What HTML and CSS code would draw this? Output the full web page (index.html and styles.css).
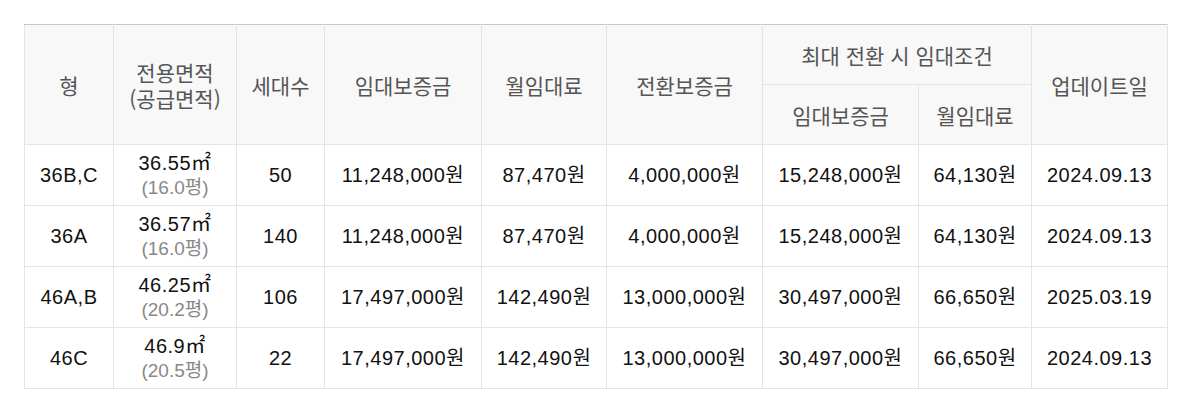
FILE: index.html
```html
<!DOCTYPE html>
<html lang="ko">
<head>
<meta charset="utf-8">
<link rel="stylesheet" href="styles.css">
</head>
<body>
<table class="rent">
  <colgroup>
    <col class="c1"><col class="c2"><col class="c3"><col class="c4"><col class="c5">
    <col class="c6"><col class="c7"><col class="c8"><col class="c9">
  </colgroup>
  <thead>
    <tr>
      <th rowspan="2">형</th>
      <th rowspan="2">전용면적<br>(공급면적)</th>
      <th rowspan="2">세대수</th>
      <th rowspan="2">임대보증금</th>
      <th rowspan="2">월임대료</th>
      <th rowspan="2">전환보증금</th>
      <th colspan="2">최대 전환 시 임대조건</th>
      <th rowspan="2">업데이트일</th>
    </tr>
    <tr>
      <th>임대보증금</th>
      <th>월임대료</th>
    </tr>
  </thead>
  <tbody>
    <tr>
      <td>36B,C</td>
      <td><span class="area">36.55㎡</span><span class="py">(16.0평)</span></td>
      <td>50</td>
      <td>11,248,000원</td>
      <td>87,470원</td>
      <td>4,000,000원</td>
      <td>15,248,000원</td>
      <td>64,130원</td>
      <td>2024.09.13</td>
    </tr>
    <tr>
      <td>36A</td>
      <td><span class="area">36.57㎡</span><span class="py">(16.0평)</span></td>
      <td>140</td>
      <td>11,248,000원</td>
      <td>87,470원</td>
      <td>4,000,000원</td>
      <td>15,248,000원</td>
      <td>64,130원</td>
      <td>2024.09.13</td>
    </tr>
    <tr>
      <td>46A,B</td>
      <td><span class="area">46.25㎡</span><span class="py">(20.2평)</span></td>
      <td>106</td>
      <td>17,497,000원</td>
      <td>142,490원</td>
      <td>13,000,000원</td>
      <td>30,497,000원</td>
      <td>66,650원</td>
      <td>2025.03.19</td>
    </tr>
    <tr>
      <td>46C</td>
      <td><span class="area">46.9㎡</span><span class="py">(20.5평)</span></td>
      <td>22</td>
      <td>17,497,000원</td>
      <td>142,490원</td>
      <td>13,000,000원</td>
      <td>30,497,000원</td>
      <td>66,650원</td>
      <td>2024.09.13</td>
    </tr>
  </tbody>
</table>
</body>
</html>
```

FILE: styles.css
```css
html, body {
  margin: 0;
  background: #fff;
}
body {
  padding: 24px;
  font-family: "Liberation Sans", "Noto Sans CJK KR", sans-serif;
}
.rent {
  border-collapse: collapse;
  table-layout: fixed;
  width: 1144px;
  border-top: 1px solid #c8c8c8;
}
.c1 { width: 89px; }
.c2 { width: 123px; }
.c3 { width: 88px; }
.c4 { width: 157px; }
.c5 { width: 125px; }
.c6 { width: 156px; }
.c7 { width: 156px; }
.c8 { width: 113px; }
.c9 { width: 136px; }
.rent th, .rent td {
  border: 1px solid #e4e4e4;
  text-align: center;
  padding: 0;
}
.rent th {
  background: #f8f8f8;
  color: #555;
  font-family: "Noto Sans CJK KR", sans-serif;
  font-weight: 400;
  font-size: 21px;
  line-height: 26px;
  height: 59px;
}
.rent thead tr:first-child th {
  border-top: 1px solid #c8c8c8;
}
.rent td {
  color: #111;
  font-size: 20px;
  letter-spacing: 0.5px;
  line-height: 24px;
  height: 60px;
}
.area, .py {
  display: block;
}
.area {
  font-size: 20px;
  line-height: 25px;
}
.py {
  color: #888;
  font-size: 19px;
  letter-spacing: 0;
  line-height: 24px;
}
```
